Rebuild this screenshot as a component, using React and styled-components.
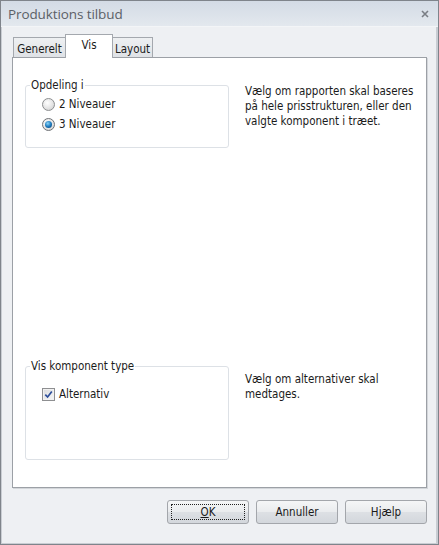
import React from 'react';
import styled, {createGlobalStyle} from 'styled-components';

const GlobalStyle = createGlobalStyle`
   html, body {
      margin: 0;
      padding: 0;
      background: #fff;
   }
   body {
      font-family: "DejaVu Sans Condensed", "Liberation Sans", sans-serif;
      font-size: 11px;
      color: #1b1b1b;
   }
`;

const Window = styled.div`
   width: 439px;
   height: 545px;
   box-sizing: border-box;
   display: flex;
   flex-direction: column;
   border: 1px solid #7f848b;
   background: #eef0f3;
`;

const TitleBar = styled.div`
   flex: none;
   height: 26px;
   box-sizing: border-box;
   display: flex;
   align-items: center;
   justify-content: space-between;
   padding: 0 9px 0 7px;
   background: linear-gradient(#d3dbe5, #e3e8ee);
   border-bottom: 1px solid #f3f5f7;
`;

const Title = styled.div`
   font-family: "Open Sans", "Liberation Sans", sans-serif;
   font-size: 13.5px;
   color: #5b6067;
   letter-spacing: -0.1px;
`;

const Body = styled.div`
   flex: 1;
   display: flex;
   flex-direction: column;
   padding: 7px 9px 0 10px;
   border-left: 1px solid #c9cdd3;
   border-right: 2px solid #c9cdd3;
   border-bottom: 1px solid #c9cdd3;
`;

const TabRow = styled.div`
   display: flex;
   align-items: flex-end;
   height: 24px;
   padding-left: 1px;
   margin-bottom: -1px;
   position: relative;
   z-index: 1;
`;

const Tab = styled.div`
   box-sizing: border-box;
   width: ${p => p.$w}px;
   height: ${p => (p.$active ? 24 : 20)}px;
   margin-bottom: ${p => (p.$active ? 0 : 1)}px;
   margin-left: ${p => (p.$first ? 0 : -1)}px;
   border: 1px solid #a4a8ae;
   border-bottom: none;
   background: ${p => (p.$active ? '#fff' : 'linear-gradient(#eef0f2, #dfe2e6)')};
   display: flex;
   justify-content: center;
   padding-top: ${p => (p.$active ? 3 : 4)}px;
   z-index: ${p => (p.$active ? 2 : 1)};
   font-size: 11.5px;
`;

const Panel = styled.div`
   box-sizing: border-box;
   height: 431px;
   background: #fff;
   border: 1px solid #9ca0a6;
   box-shadow: 1px 1px 0 #d3d6da;
   padding: 21px 12px 27px 12px;
   display: grid;
   grid-template-rows: auto 1fr auto;
`;

const Section = styled.div`
   display: grid;
   grid-template-columns: 204px 1fr;
   column-gap: 16px;
   align-items: start;
`;

const Group = styled.fieldset`
   margin: 0;
   min-width: 0;
   border: 1px solid #dde1e6;
   border-radius: 3px;
   padding: ${p => p.$pad};
`;

const Legend = styled.legend`
   padding: 0 1px;
   margin-left: -12px;
   line-height: 13px;
   font-size: 11.5px;
`;

const OptionRow = styled.label`
   display: flex;
   align-items: center;
   gap: 4px;
   height: 20px;
   font-size: 11.5px;
`;

const Radio = styled.span`
   position: relative;
   width: 13px;
   height: 13px;
   box-sizing: border-box;
   border-radius: 50%;
   border: 1px solid ${p => (p.$checked ? '#6f7276' : '#8c8e90')};
   background: radial-gradient(circle at 40% 35%, #ffffff, #e4e4e4 55%, #c9c9c9);

   &::after {
      content: '';
      display: ${p => (p.$checked ? 'block' : 'none')};
      position: absolute;
      left: 2px;
      top: 2px;
      width: 7px;
      height: 7px;
      border-radius: 50%;
      background: radial-gradient(circle at 40% 35%, #8ad4f6, #1f7cc0 50%, #0a3a68);
   }
`;

const CheckBox = styled.span`
   width: 13px;
   height: 13px;
   box-sizing: border-box;
   border: 1px solid #8e8f91;
   background: linear-gradient(135deg, #d9dadc, #f8f8f8);
   box-shadow: inset 0 0 0 1px #f1f1f1;
   display: flex;
   align-items: center;
   justify-content: center;
`;

const Help = styled.div`
   margin-top: ${p => p.$top}px;
   line-height: 15px;
   font-size: 11.5px;
   white-space: nowrap;
`;

const ButtonRow = styled.div`
   display: flex;
   justify-content: flex-end;
   gap: 7px;
   margin-top: 12px;
`;

const Button = styled.button`
   position: relative;
   width: 82px;
   height: 24px;
   padding: 0;
   border: 1px solid #a3a6ab;
   border-radius: 3px;
   background: linear-gradient(#f5f6f7, #eaecee 48%, #dde0e4 52%, #d3d7dc);
   font-family: inherit;
   font-size: 11.5px;
   color: #1b1b1b;

   &::after {
      content: '';
      display: ${p => (p.$focus ? 'block' : 'none')};
      position: absolute;
      inset: 3px;
      border: 1px dotted #222;
   }

   u {
      text-decoration: underline;
   }
`;

const CloseIcon = () => (
   <svg width="8" height="8" viewBox="0 0 8 8">
      <path d="M1 1 L7 7 M7 1 L1 7" stroke="#7a7e85" strokeWidth="1.6" fill="none"/>
   </svg>
);

const CheckMark = () => (
   <svg width="9" height="9" viewBox="0 0 9 9">
      <path d="M1.3 4.6 L3.6 7 L7.8 1.6" stroke="#2d4e9a" strokeWidth="1.7" fill="none"/>
   </svg>
);

const App = () => (
   <>
      <GlobalStyle/>
      <Window>
         <TitleBar>
            <Title>Produktions tilbud</Title>
            <CloseIcon/>
         </TitleBar>
         <Body>
            <TabRow>
               <Tab $w={53} $first>Generelt</Tab>
               <Tab $w={48} $active>Vis</Tab>
               <Tab $w={41}>Layout</Tab>
            </TabRow>
            <Panel>
               <Section>
                  <Group $pad="2px 8px 13px 16px">
                     <Legend>Opdeling i</Legend>
                     <OptionRow><Radio/>2 Niveauer</OptionRow>
                     <OptionRow><Radio $checked/>3 Niveauer</OptionRow>
                  </Group>
                  <Help $top={5}>
                     Vælg om rapporten skal baseres<br/>
                     på hele prisstrukturen, eller den<br/>
                     valgte komponent i træet.
                  </Help>
               </Section>
               <div/>
               <Section>
                  <Group $pad="11px 8px 55px 16px">
                     <Legend>Vis komponent type</Legend>
                     <OptionRow><CheckBox><CheckMark/></CheckBox>Alternativ</OptionRow>
                  </Group>
                  <Help $top={12}>
                     Vælg om alternativer skal<br/>
                     medtages.
                  </Help>
               </Section>
            </Panel>
            <ButtonRow>
               <Button $focus><u>O</u>K</Button>
               <Button>Annuller</Button>
               <Button>Hjælp</Button>
            </ButtonRow>
         </Body>
      </Window>
   </>
);

export default App;
